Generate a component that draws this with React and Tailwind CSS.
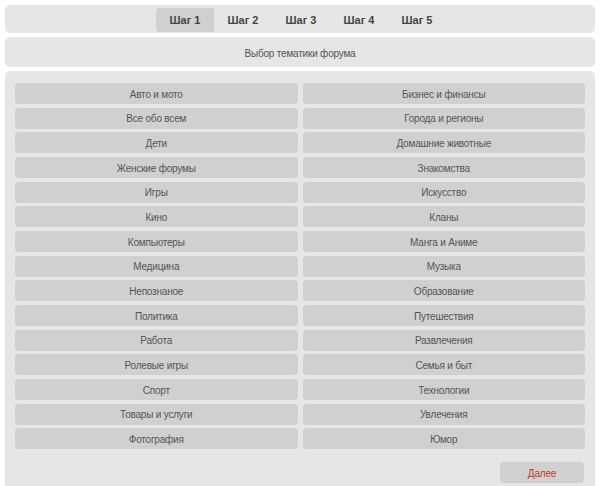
import { useState } from 'react'

const topics = [
  ['Авто и мото', 'Бизнес и финансы'],
  ['Все обо всем', 'Города и регионы'],
  ['Дети', 'Домашние животные'],
  ['Женские форумы', 'Знакомства'],
  ['Игры', 'Искусство'],
  ['Кино', 'Кланы'],
  ['Компьютеры', 'Манга и Аниме'],
  ['Медицина', 'Музыка'],
  ['Непознаное', 'Образование'],
  ['Политика', 'Путешествия'],
  ['Работа', 'Развлечения'],
  ['Ролевые игры', 'Семья и быт'],
  ['Спорт', 'Технологии'],
  ['Товары и услуги', 'Увлечения'],
  ['Фотография', 'Юмор'],
]

const steps = ['Шаг 1', 'Шаг 2', 'Шаг 3', 'Шаг 4', 'Шаг 5']

export default function App() {
  const [step, setStep] = useState(0)
  const [picked, setPicked] = useState(null)

  return (
    <div
      className="min-h-screen bg-white p-[5px] flex flex-col gap-[4px] text-[10px] tracking-[-0.2px] text-[#555]"
      style={{ fontFamily: '"Liberation Sans", Arial, sans-serif' }}
    >
      {/* шаги */}
      <div className="h-[28px] rounded-[5px] bg-[#e6e6e6] flex justify-center pt-[3px] pb-[1px] pl-[2px]">
        {steps.map((s, i) => (
          <button
            key={s}
            onClick={() => setStep(i)}
            className={`w-[58px] h-[24px] pt-[1px] font-bold text-[#444] text-[11px] tracking-normal ${
              step === i ? 'bg-[#d0d0d0] rounded-l-[4px]' : ''
            }`}
          >
            {s}
          </button>
        ))}
      </div>

      <div className="h-[30px] rounded-[5px] bg-[#e6e6e6] flex items-center justify-center pt-[2px]">
        Выбор тематики форума
      </div>

      <div className="flex-1 rounded-t-[5px] bg-[#e6e6e6] px-[10px] pt-[12px] pb-[10px]">
        <div className="grid grid-cols-2 gap-x-[5px] gap-y-[3.68px]">
          {topics.flat().map((t) => (
            <button
              key={t}
              onClick={() => setPicked(t)}
              className={`h-[21px] pt-[1px] rounded-[4px] text-[#555] ${
                picked === t ? 'bg-[#bdbdbd]' : 'bg-[#d0d0d0]'
              }`}
            >
              {t}
            </button>
          ))}
        </div>
        <div className="flex justify-end mt-[13px] pr-[1px]">
          <button className="w-[84px] h-[21px] pt-[1px] rounded-[4px] bg-[#d0d0d0] text-[#c0392b]">
            Далее
          </button>
        </div>
      </div>
    </div>
  )
}
